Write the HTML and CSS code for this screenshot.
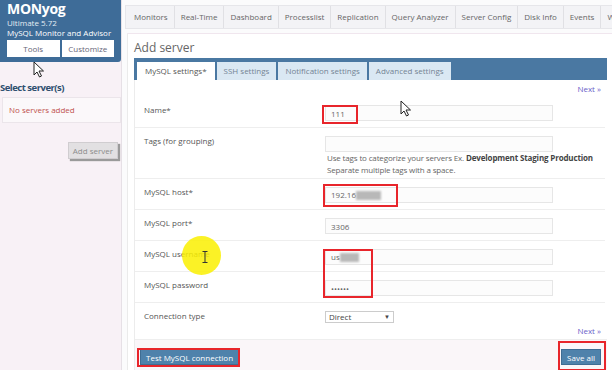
FILE: index.html
```html
<!DOCTYPE html>
<html lang="en">
<head>
    <meta charset="UTF-8">
    <title>MONyog - Add server</title>
    <link rel="stylesheet" href="styles.css">
</head>
<body>
    <div class="page">
        <aside class="sidebar">
            <div class="brand">
                <div class="brand-name">MONyog</div>
                <div class="brand-edition">Ultimate 5.72</div>
                <div class="brand-sub">MySQL Monitor and Advisor</div>
                <div class="brand-buttons">
                    <span class="brand-btn">Tools</span>
                    <span class="brand-btn">Customize</span>
                </div>
            </div>
            <h2 class="side-title">Select server(s)</h2>
            <div class="server-list">No servers added</div>
            <div class="side-actions">
                <button class="btn-gray">Add server</button>
            </div>
        </aside>

        <main class="main">
            <nav class="topnav">
                <span class="nav-item">Monitors</span>
                <span class="nav-item">Real-Time</span>
                <span class="nav-item">Dashboard</span>
                <span class="nav-item">Processlist</span>
                <span class="nav-item">Replication</span>
                <span class="nav-item">Query Analyzer</span>
                <span class="nav-item">Server Config</span>
                <span class="nav-item">Disk Info</span>
                <span class="nav-item">Events</span>
                <span class="nav-item">Wiki</span>
            </nav>

            <section class="panel">
                <h1 class="panel-title">Add server</h1>
                <div class="tabs">
                    <span class="tab active">MySQL settings*</span>
                    <span class="tab">SSH settings</span>
                    <span class="tab">Notification settings</span>
                    <span class="tab">Advanced settings</span>
                </div>
                <div class="tab-body">
                    <div class="next-row top"><a class="next">Next &raquo;</a></div>

                    <div class="row">
                        <label>Name*</label>
                        <div class="field"><input type="text" value="111"></div>
                    </div>
                    <div class="row tags">
                        <label>Tags (for grouping)</label>
                        <div class="field">
                            <input type="text">
                            <p class="help">Use tags to categorize your servers Ex. <b>Development Staging Production</b><br>Separate multiple tags with a space.</p>
                        </div>
                    </div>
                    <div class="row">
                        <label>MySQL host*</label>
                        <div class="field"><div class="fake-input">192.16<span class="blur wide"></span></div></div>
                    </div>
                    <div class="row">
                        <label>MySQL port*</label>
                        <div class="field"><input type="text" value="3306"></div>
                    </div>
                    <div class="row">
                        <label>MySQL username</label>
                        <div class="field"><div class="fake-input">us<span class="blur"></span></div></div>
                    </div>
                    <div class="row">
                        <label>MySQL password</label>
                        <div class="field"><input type="password" value="secret"></div>
                    </div>
                    <div class="row last">
                        <label>Connection type</label>
                        <div class="field"><span class="select">Direct <span class="caret">&#9660;</span></span></div>
                    </div>

                    <div class="next-row"><a class="next">Next &raquo;</a></div>

                    <div class="footer">
                        <button class="btn-blue">Test MySQL connection</button>
                        <button class="btn-blue">Save all</button>
                    </div>
                </div>
            </section>
        </main>
    </div>

    <!-- annotations drawn over the screenshot -->
    <div class="mark" style="left:322px;top:105px;width:36px;height:19px"></div>
    <div class="mark" style="left:323px;top:184px;width:75px;height:23px"></div>
    <div class="mark" style="left:323px;top:249px;width:50px;height:49px"></div>
    <div class="mark" style="left:137px;top:348px;width:103px;height:19px"></div>
    <div class="mark" style="left:558px;top:341px;width:48px;height:30px"></div>
    <div class="spot"></div>

    <svg class="cursor c1" width="12" height="17" viewBox="0 0 12 17">
        <path d="M1 1 L1 14 L4 11 L6.5 16 L8.5 15 L6 10 L10.5 10 Z" fill="#fff" stroke="#222" stroke-width="1"/>
    </svg>
    <svg class="cursor c2" width="12" height="17" viewBox="0 0 12 17">
        <path d="M1 1 L1 14 L4 11 L6.5 16 L8.5 15 L6 10 L10.5 10 Z" fill="#fff" stroke="#222" stroke-width="1"/>
    </svg>
    <svg class="cursor c3" width="6" height="12" viewBox="0 0 6 12">
        <path d="M0.5 0.5 H5.5 M3 0.5 V11.5 M0.5 11.5 H5.5" fill="none" stroke="#333" stroke-width="1"/>
    </svg>
</body>
</html>
```

FILE: styles.css
```css
body {
    margin: 0;
    font-family: "Open Sans", Arial, sans-serif;
    background: #fff;
    color: #555;
    width: 612px;
    height: 370px;
    overflow: hidden;
    position: relative;
}
.page {
    display: flex;
    height: 370px;
}

/* sidebar */
.sidebar {
    width: 121px;
    flex: none;
    background: #f8f1f6;
    border-right: 1px solid #e6e0e6;
}
.brand {
    background: #3e6c98;
    color: #fff;
    padding: 0 7px 5px 7px;
    border-bottom-right-radius: 3px;
}
.brand-name {
    font-size: 14px;
    font-weight: bold;
    line-height: 18px;
    letter-spacing: -0.3px;
}
.brand-edition {
    font-size: 8px;
    line-height: 10px;
    color: #e4ecf4;
}
.brand-sub {
    font-size: 8px;
    line-height: 10px;
    white-space: nowrap;
}
.brand-buttons {
    display: flex;
    margin-top: 2px;
    gap: 2px;
}
.brand-btn {
    flex: 1;
    background: #fff;
    color: #667;
    font-size: 8px;
    line-height: 17px;
    text-align: center;
}
.side-title {
    margin: 19px 0 0 0;
    font-size: 9.5px;
    line-height: 13px;
    letter-spacing: -0.5px;
    color: #2f4f6f;
}
.server-list {
    margin: 3px 0 0 2px;
    height: 24px;
    background: #fbf8fa;
    border: 1px solid #ebe5ea;
    color: #c0504d;
    font-size: 8px;
    line-height: 24px;
    padding-left: 6px;
}
.side-actions {
    display: flex;
    justify-content: flex-end;
    padding: 19px 3px 0 0;
}
.btn-gray {
    font-family: inherit;
    font-size: 8px;
    color: #8c8c8c;
    background: #e2e0e2;
    border: 1px solid #d0cdd0;
    box-shadow: 2px 2px 1px #9a9a9a;
    height: 17px;
    padding: 0 4px;
}

/* main */
.main {
    flex: 1;
    min-width: 0;
    display: flex;
    flex-direction: column;
    background: #fbfbfc;
}
.topnav {
    flex: none;
    display: flex;
    margin: 5px 0 0 3px;
    height: 22px;
    background: #f3f3f6;
    border: 1px solid #e6e6ea;
    border-right: none;
    white-space: nowrap;
    overflow: hidden;
}
.nav-item {
    font-size: 8px;
    line-height: 22px;
    color: #666;
    padding: 0 6px;
    border-right: 1px solid #e0e0e4;
}
.nav-item:first-child {
    padding-left: 8px;
}
.panel {
    margin: 4px 0 0 5px;
    flex: 1;
    background: #fff;
    border-top: 1px solid #f0e6ee;
    border-left: 1px solid #ebebeb;
    padding: 6px 5px 0 6px;
}
.panel-title {
    margin: 0;
    font-size: 12px;
    font-weight: normal;
    line-height: 16px;
    color: #666;
}
.tabs {
    display: flex;
    margin-top: 2px;
    height: 18px;
    padding: 4px 0 0 3px;
    background: #4a78a2;
    gap: 2px;
}
.tab {
    font-size: 8px;
    line-height: 18px;
    padding: 0 7px;
    background: #dae8f3;
    color: #748494;
}
.tab.active {
    background: #fff;
    color: #555;
    padding: 0 8px;
}
.tab-body {
    border-left: 1px solid #ececec;
}
.next-row {
    text-align: right;
    padding-right: 6px;
    height: 14px;
    font-size: 8px;
    line-height: 12px;
}
.next-row.top {
    padding-top: 3px;
}
.next {
    color: #6a62c8;
}
.row {
    display: grid;
    grid-template-columns: 181px 228px;
    padding: 7px 0 6px 9px;
    border-bottom: 1px solid #eeeeee;
    margin-right: 2px;
}
.row.tags {
    padding-bottom: 2px;
}
.row.last {
    border-bottom: none;
    padding-bottom: 2px;
}
.row label {
    font-size: 8px;
    line-height: 12px;
    color: #555;
}
.field {
    font-size: 8px;
    line-height: 12px;
}
.field input,
.fake-input {
    box-sizing: border-box;
    width: 228px;
    height: 16px;
    margin: 1px 0 0 0;
    border: 1px solid #e6e6e6;
    background: #fcfcfc;
    font-family: inherit;
    font-size: 8px;
    color: #666;
    padding: 0 5px;
    display: block;
}
.fake-input {
    line-height: 14px;
}
.blur {
    display: inline-block;
    vertical-align: middle;
    width: 19px;
    height: 9px;
    background: #b8b8b8;
    filter: blur(1px);
}
.blur.wide {
    width: 25px;
}
.help {
    margin: 0 0 0 2px;
    font-size: 8px;
    line-height: 12px;
    letter-spacing: -0.15px;
    color: #666;
    white-space: nowrap;
}
.help b {
    color: #444;
}
.select {
    display: flex;
    justify-content: space-between;
    box-sizing: border-box;
    width: 69px;
    height: 12px;
    margin-top: 1px;
    border: 1px solid #ccc;
    font-size: 8px;
    line-height: 10px;
    padding: 0 3px;
    color: #444;
}
.caret {
    font-size: 6px;
}
.footer {
    display: flex;
    justify-content: space-between;
    border-top: 1px solid #eee;
    background: #faf6f9;
    padding: 9px 6px 6px 5px;
}
.btn-blue {
    font-family: inherit;
    font-size: 8px;
    color: #fff;
    background: #4f82ab;
    border: 1px solid #3f6d93;
    height: 16px;
    padding: 0 5px;
}

/* overlays */
.mark {
    position: absolute;
    box-sizing: border-box;
    border: 2px solid #e8252b;
}
.spot {
    position: absolute;
    left: 182px;
    top: 236px;
    width: 39px;
    height: 39px;
    border-radius: 50%;
    background: rgba(250, 240, 0, 0.85);
}
.cursor {
    position: absolute;
}
.c1 {
    left: 33px;
    top: 61px;
}
.c2 {
    left: 400px;
    top: 100px;
}
.c3 {
    left: 202px;
    top: 251px;
}
```
